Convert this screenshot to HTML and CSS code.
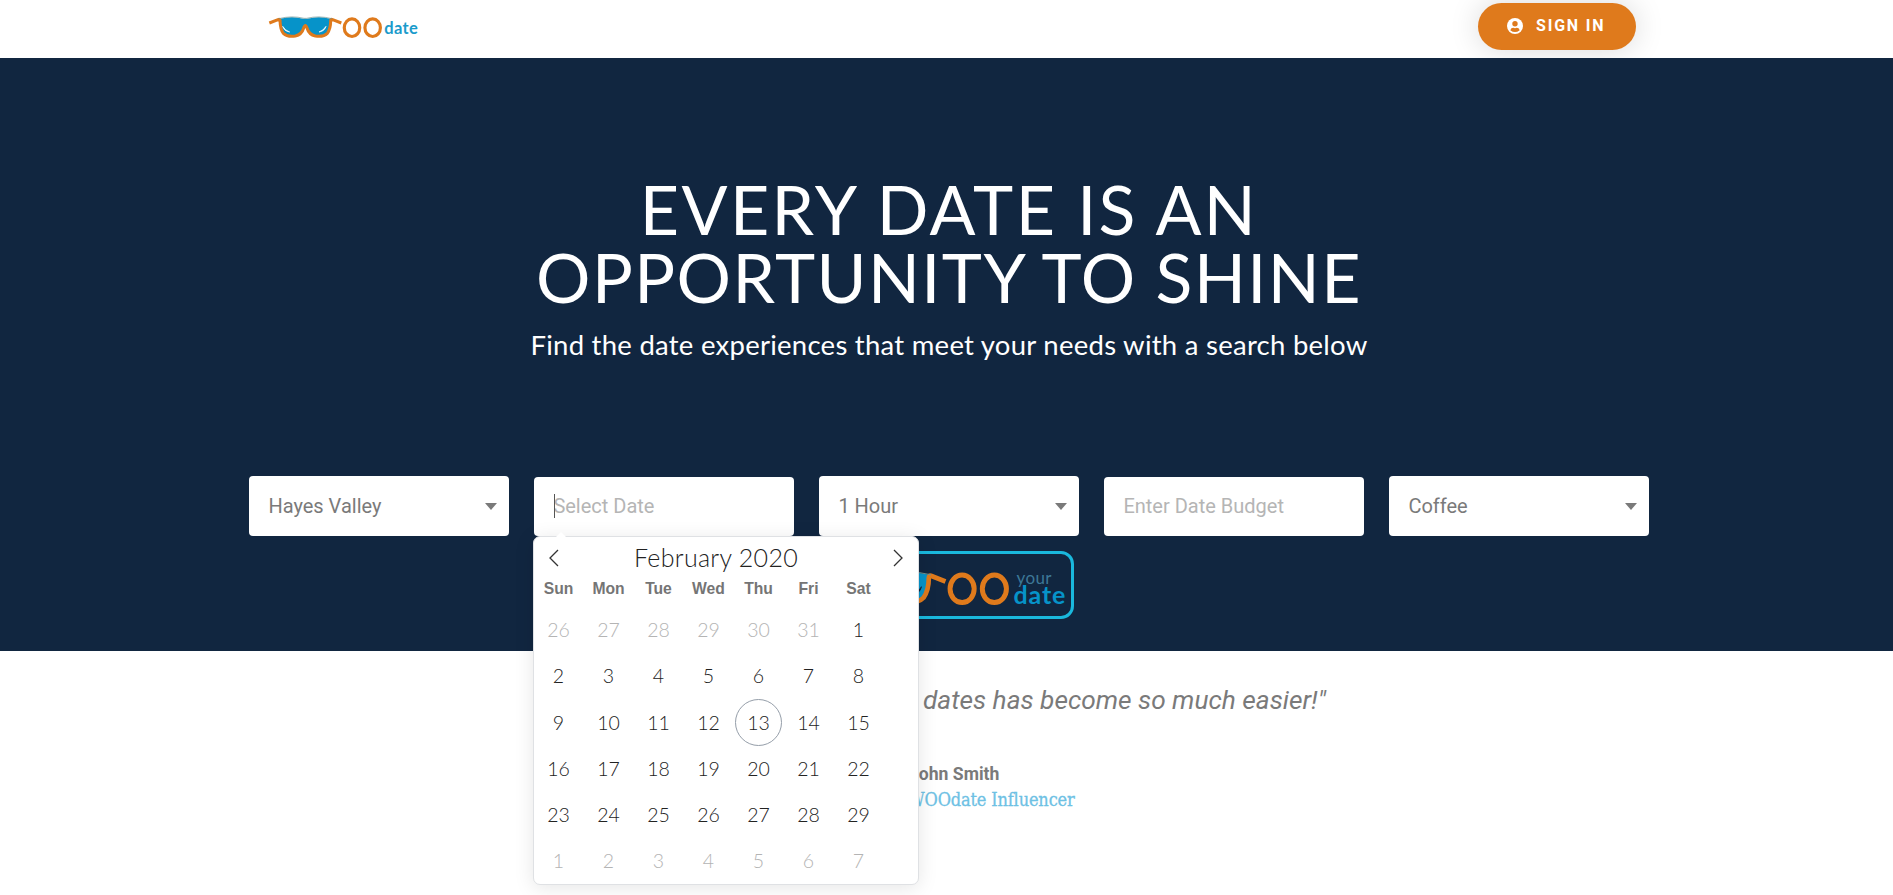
FILE: index.html
```html
<!DOCTYPE html>
<html lang="en">
<head>
<meta charset="utf-8">
<title>WOOdate</title>
<link rel="stylesheet" href="styles.css">
</head>
<body>
<svg class="defs" width="0" height="0">
  <symbol id="glasses" viewBox="40 44 345 72">
    <path d="M76 55Q112 46 146 55H158Q192 46 228 55Q228 82 219 97Q205 108 181 105Q163 103 152 80Q141 103 123 105Q98 108 84 97Q76 82 76 55Z" fill="#0693c9"/>
    <path d="M44 68L72 57Q76 56 76 61Q77 88 86 99Q99 111 122 107Q141 103 147 83Q152 68 157 83Q163 103 182 107Q206 111 218 99Q228 85 228 61Q228 56 232 57L260 68" fill="none" stroke="#df7a1c" stroke-width="9" stroke-linejoin="round"/>
    <path d="M72 55Q112 45 148 54H156Q192 45 232 55" fill="none" stroke="#6f9190" stroke-width="2"/>
    <path class="glint" d="M84 78Q88 93 105 95Q91 90 84 78ZM214 78Q210 93 193 95Q207 90 214 78Z" stroke-width="2"/>
    <ellipse cx="292" cy="82" rx="23.2" ry="26.5" fill="none" stroke="#df7a1c" stroke-width="9.5"/>
    <ellipse cx="354" cy="82" rx="23.2" ry="26.5" fill="none" stroke="#df7a1c" stroke-width="9.5"/>
  </symbol>
</svg>

<header class="header">
  <a class="logo"><svg class="logo-mark"><use href="#glasses"/></svg><span class="logo-text">date</span></a>
  <a class="signin">
    <svg width="16" height="16" viewBox="0 0 16 16"><circle cx="8" cy="8" r="8" fill="#fff"/><circle cx="8" cy="5.8" r="2.7" fill="#df7a1c"/><path d="M3.3 12.2Q4 9.8 6.2 9.8Q8 10.5 9.8 9.8Q12 9.8 12.7 12.2Q8 16 3.3 12.2Z" fill="#df7a1c"/></svg>
    <span>SIGN IN</span>
  </a>
</header>

<section class="hero">
  <h1 class="title"><span class="title-a">EVERY DATE IS AN</span><span class="title-b">OPPORTUNITY TO SHINE</span></h1>
  <p class="subtitle">Find the date experiences that meet your needs with a search below</p>
  <form class="search">
    <div class="field select">Hayes Valley<i class="arrow"></i></div>
    <div class="field input date-field"><i class="cursor"></i>Select Date
      <div class="calendar">
        <div class="month">
          <svg width="12" height="18" viewBox="0 0 12 18"><path d="M10 1L2 9L10 17"/></svg>
          <span class="month-name">February 2020</span>
          <svg width="12" height="18" viewBox="0 0 12 18"><path d="M2 1L10 9L2 17"/></svg>
        </div>
        <div class="weekdays"><span>Sun</span><span>Mon</span><span>Tue</span><span>Wed</span><span>Thu</span><span>Fri</span><span>Sat</span></div>
        <div class="days">
          <span class="off">26</span><span class="off">27</span><span class="off">28</span><span class="off">29</span><span class="off">30</span><span class="off">31</span><span>1</span>
          <span>2</span><span>3</span><span>4</span><span>5</span><span>6</span><span>7</span><span>8</span>
          <span>9</span><span>10</span><span>11</span><span>12</span><span class="today">13</span><span>14</span><span>15</span>
          <span>16</span><span>17</span><span>18</span><span>19</span><span>20</span><span>21</span><span>22</span>
          <span>23</span><span>24</span><span>25</span><span>26</span><span>27</span><span>28</span><span>29</span>
          <span class="off">1</span><span class="off">2</span><span class="off">3</span><span class="off">4</span><span class="off">5</span><span class="off">6</span><span class="off">7</span>
        </div>
      </div>
    </div>
    <div class="field select">1 Hour<i class="arrow"></i></div>
    <div class="field input">Enter Date Budget</div>
    <div class="field select">Coffee<i class="arrow"></i></div>
  </form>
  <a class="woo">
    <svg class="woo-mark"><use href="#glasses"/></svg>
    <span class="woo-text"><span class="woo-your">your</span><span class="woo-date">date</span></span>
  </a>
</section>

<section class="testimonial">
  <p class="quote">dates has become so much easier!"</p>
  <p class="author">John Smith</p>
  <p class="role">WOOdate Influencer</p>
</section>
</body>
</html>
```
FILE: styles.css
```css
* { box-sizing: border-box; }
html { overflow: hidden; }
body { margin: 0; height: 895px; overflow: hidden; background: #fff; font-family: Roboto, sans-serif; color: #7a7a7a; }
p, h1 { margin: 0; }
svg { display: block; flex: none; }
.defs { position: absolute; }
.glint { fill: var(--glint); stroke: var(--glint); }

.header { height: 58px; padding: 3px 257px 0 268.3px; display: flex; justify-content: space-between; align-items: flex-start; overflow: hidden; }
.logo { display: flex; padding-top: 11.7px; }
.logo-mark { width: 115px; height: 24px; --glint: #fff; }
.logo-text { font: 700 16.5px/20px Lato, sans-serif; color: #1a9bcb; margin: 3px 0 0 1px; letter-spacing: .3px; }
.signin { width: 158px; height: 47px; border-radius: 24px; background: #df7a1c; color: #fff; display: flex; align-items: center; padding: 0 0 1px 29px; gap: 13px; font-weight: 700; font-size: 16px; letter-spacing: 1.8px; box-shadow: 0 0 30px rgba(0, 0, 0, .15); white-space: nowrap; }
.signin span { margin-top: -2px; }
.signin svg { margin-top: -1px; }

.hero { height: 593px; background: #112640; color: #fff; display: flex; flex-direction: column; align-items: center; padding: 117px 244px 0 249px; }
.title { font: 400 68px/68px Lato, sans-serif; display: flex; flex-direction: column; align-items: center; white-space: nowrap; }
.title-a { letter-spacing: 2.4px; }
.title-b { letter-spacing: 1.45px; }
.subtitle { font: 400 27.5px/36px Lato, sans-serif; margin-top: 16px; letter-spacing: .26px; white-space: nowrap; }
.search { display: flex; gap: 25px; align-items: flex-end; margin-top: 113px; height: 60px; width: 1400px; }
.field { width: 260px; height: 60px; flex: none; background: #fff; border-radius: 4px; color: #7a7a7a; font-size: 20px; line-height: 60px; padding-left: 19.4px; position: relative; white-space: nowrap; }
.input { height: 59px; line-height: 59px; color: #b5b5b5; }
.arrow { position: absolute; right: 12px; top: 27px; border: 6px solid transparent; border-top: 7px solid #7a7a7a; border-bottom: 0; }
.cursor { position: absolute; left: 20px; top: 17px; width: 1px; height: 24px; background: #555; }

.woo { margin: 15px 0 0; width: 250px; height: 68px; border: 3px solid #1ab8dd; border-radius: 13px; display: flex; padding: 15px 0 0 4px; flex: none; }
.woo-mark { width: 179.5px; height: 37.5px; --glint: #112640; }
.woo-text { display: flex; flex-direction: column; width: 54px; margin-left: 3px; font-family: Lato, sans-serif; }
.woo-your { font-size: 17px; line-height: 18px; color: #3d7897; letter-spacing: .4px; padding-left: 3px; }
.woo-date { font-size: 25px; font-weight: 700; line-height: 24px; color: #0693c9; margin-top: -5px; letter-spacing: .9px; }

.calendar { position: absolute; left: -1px; top: 59px; width: 386px; height: 349px; background: #fff; border: 1px solid #dfe1e4; border-radius: 7px; box-shadow: 0 3px 20px rgba(0, 0, 0, .1); z-index: 2; font-family: Lato, sans-serif; line-height: 1; color: #222; }
.calendar::before { content: ""; position: absolute; left: 22px; top: -5px; border: 5px solid transparent; border-bottom-color: #fff; border-top: 0; }
.month { height: 42px; display: flex; align-items: center; justify-content: space-between; padding: 0 14px 0 14px; }
.month svg { fill: none; stroke: #333; stroke-width: 1.3; }
.month-name { font-size: 25px; font-weight: 300; color: #222; letter-spacing: .3px; margin: -1px 20px 0 0; }
.weekdays { display: grid; grid-template-columns: repeat(7, 50px); margin-left: -.5px; text-align: center; font-family: "Liberation Sans", Arial, sans-serif; font-weight: 700; font-size: 15.7px; line-height: 20px; color: #757575; }
.days { display: grid; grid-template-columns: repeat(7, 50px); grid-auto-rows: 46.25px; margin: 7px 0 0 -.5px; justify-items: center; font-size: 19.5px; font-weight: 300; }
.days span { width: 47px; height: 47px; line-height: 46px; text-align: center; border: 1px solid transparent; border-radius: 50%; }
.days .off { color: #b4b4b4; }
.days .today { border-color: #959ea9; }

.testimonial { padding-left: 910px; white-space: nowrap; }
.quote { font-style: italic; font-size: 26.25px; line-height: 36px; padding: 31px 0 0 13px; }
.author { font-weight: 700; font-size: 17.6px; line-height: 26px; margin: 43px 0 0 -1px; }
.role { font-family: "Roboto Slab", "DejaVu Serif Condensed", "DejaVu Serif", serif; font-size: 18px; letter-spacing: -.15px; line-height: 26px; color: #6ec1e4; -webkit-text-stroke: .3px #6ec1e4; margin-left: -2px; }
```
